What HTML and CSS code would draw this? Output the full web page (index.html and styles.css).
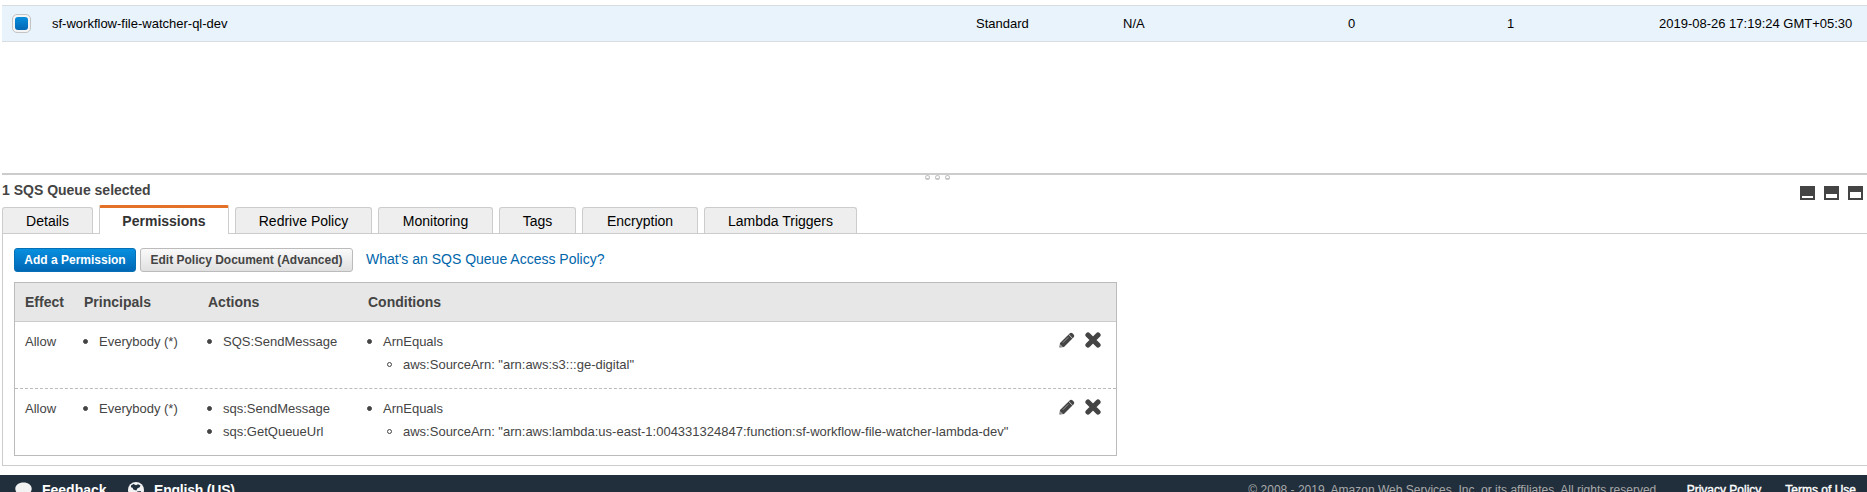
FILE: index.html
```html
<!DOCTYPE html>
<html lang="en">
<head>
<meta charset="utf-8">
<title>SQS Management Console</title>
<link rel="stylesheet" href="styles.css">
</head>
<body>
<svg class="defs" aria-hidden="true">
  <symbol id="pencil" viewBox="0 0 16 16">
    <path d="M0.4 15.5 L1 11 L10.6 1.4 Q12 0 13.4 1.2 L14.7 2.5 Q16 4 14.7 5.3 L5 15 Z" fill="#444"/>
    <path d="M9.7 2.5 L13.6 6.4" stroke="#fff" stroke-width=".7"/>
    <path d="M3.8 10.8 L9.3 5.3" stroke="#aaa" stroke-width=".8"/>
    <path d="M1.5 12 L2.2 13.5 L4 14.4 L1.3 14.8 Z" fill="#ccc"/>
  </symbol>
  <symbol id="cross" viewBox="0 0 16 16">
    <path d="M3 3 L13 13 M13 3 L3 13" stroke="#444" stroke-width="5.2" stroke-linecap="round"/>
  </symbol>
</svg>
<main class="console">
  <div class="queue-row">
    <span class="checkbox"><i></i></span>
    <span class="name">sf-workflow-file-watcher-ql-dev</span>
    <span>Standard</span>
    <span>N/A</span>
    <span>0</span>
    <span>1</span>
    <span>2019-08-26 17:19:24 GMT+05:30</span>
  </div>
  <div class="splitter"><span class="grip"><i></i><i></i><i></i></span></div>
  <header class="selection">
    <h2>1 SQS Queue selected</h2>
    <div class="sizes"><i class="low"></i><i class="mid"></i><i class="high"></i></div>
  </header>
  <nav class="tabs">
    <a class="tab details">Details</a>
    <a class="tab active">Permissions</a>
    <a class="tab redrive">Redrive Policy</a>
    <a class="tab monitoring">Monitoring</a>
    <a class="tab tags">Tags</a>
    <a class="tab encryption">Encryption</a>
    <a class="tab lambda">Lambda Triggers</a>
  </nav>
  <section class="panel">
    <div class="toolbar">
      <button class="btn primary">Add a Permission</button>
      <button class="btn secondary">Edit Policy Document (Advanced)</button>
      <a class="help">What's an SQS Queue Access Policy?</a>
    </div>
    <div class="policy">
      <div class="line head"><span>Effect</span><span>Principals</span><span>Actions</span><span>Conditions</span></div>
      <div class="line">
        <span>Allow</span>
        <ul><li>Everybody (*)</li></ul>
        <ul><li>SQS:SendMessage</li></ul>
        <ul><li>ArnEquals<ul class="sub"><li>aws:SourceArn: "arn:aws:s3:::ge-digital"</li></ul></li></ul>
        <div class="tools"><svg><use href="#pencil"/></svg><svg><use href="#cross"/></svg></div>
      </div>
      <div class="line last">
        <span>Allow</span>
        <ul><li>Everybody (*)</li></ul>
        <ul><li>sqs:SendMessage</li><li>sqs:GetQueueUrl</li></ul>
        <ul><li>ArnEquals<ul class="sub"><li>aws:SourceArn: "arn:aws:lambda:us-east-1:004331324847:function:sf-workflow-file-watcher-lambda-dev"</li></ul></li></ul>
        <div class="tools"><svg><use href="#pencil"/></svg><svg><use href="#cross"/></svg></div>
      </div>
    </div>
  </section>
</main>
<footer class="footer">
  <svg class="bubble" viewBox="0 0 18 16"><path d="M9 0C4 0 .3 2.8.3 6.7c0 2.3 1.3 4.2 3.3 5.4L3 16l4-2.8 2 .2c5 0 8.7-2.8 8.7-6.7S14 0 9 0Z" fill="#f2f2f2"/></svg>
  <b class="feedback">Feedback</b>
  <svg class="globe" viewBox="0 0 16 16"><circle cx="8" cy="8" r="8" fill="#f2f2f2"/><path d="M3 3.5 5.5 2 8 3.2 10 2.2 12.5 3.4 11.7 5.3 9.5 6.2 8.3 8.6 5.3 7.6 4.6 5.7 3 5.2ZM9 9.5 13 9 12 13 9.5 14Z" fill="#212f3c"/></svg>
  <b class="language">English (US)</b>
  <span class="copyright">© 2008 - 2019, Amazon Web Services, Inc. or its affiliates. All rights reserved.</span>
  <a class="legal privacy">Privacy Policy</a>
  <a class="legal terms">Terms of Use</a>
</footer>
</body>
</html>
```
FILE: styles.css
```css
*, *::before { box-sizing: border-box; }
body {
  margin: 0;
  height: 492px;
  overflow: hidden;
  background: #fff;
  color: #444;
  font: 13px/23px "Liberation Sans", Arial, sans-serif;
  white-space: nowrap;
}
.defs { display: none; }
.console { padding: 5px 0 0 2px; height: 475px; }

.queue-row {
  display: grid;
  grid-template-columns: 50px 924px 147px 225px 159px 152px 1fr;
  align-items: center;
  height: 37px;
  background: #e8f3fc;
  border: solid #dadddf;
  border-width: 1px 0;
  color: #000;
}
.checkbox {
  display: grid;
  place-items: center;
  width: 19px;
  height: 19px;
  margin-left: 10px;
  border: 1px solid #c4c4c4;
  border-radius: 5px;
  background: #f4f4f4;
}
.checkbox i {
  width: 13px;
  height: 13px;
  border-radius: 3px;
  background: linear-gradient(#088edb, #0067b5);
}
.splitter { margin-top: 131px; height: 8px; border-top: 2px solid #ccc; }
.grip { display: flex; gap: 5px; margin-left: 923px; }
.grip i { width: 5px; height: 5px; border: solid #c4c4c4; border-width: 1px 1.5px 2px; border-radius: 3px; }

.selection { display: flex; justify-content: space-between; height: 24px; }
h2 { margin: -2px 0 0; font-size: 14px; line-height: 22px; }
.sizes { display: flex; gap: 9px; margin: 5px 4px 0 0; }
.sizes i { width: 15px; height: 14px; border: 2px solid #444; background: #fff; }
.sizes .low { border-top-width: 10px; }
.sizes .mid { border-top-width: 8px; }
.sizes .high { border-top-width: 6px; }

.tabs { display: flex; align-items: flex-end; gap: 6px; height: 29px; border-bottom: 1px solid #ccc; }
.tab {
  height: 26px;
  border: 1px solid #ccc;
  border-bottom: 0;
  border-radius: 3px 3px 0 0;
  background: #eee;
  color: #000;
  font-size: 14px;
  line-height: 26px;
  text-align: center;
}
.tab.active {
  height: 29px;
  margin-bottom: -1px;
  border-top: 3px solid #e47128;
  border-radius: 2px 2px 0 0;
  background: #fff;
  color: #333;
  font-weight: bold;
  width: 130px;
}
.details { width: 91px; }
.redrive { width: 137px; }
.monitoring { width: 115px; }
.tags { width: 77px; }
.encryption { width: 116px; }
.lambda { width: 153px; }

.panel { height: 232px; padding: 14px 0 0 11px; border: solid #ccc; border-width: 0 0 1px 1px; }
.toolbar { display: flex; height: 34px; }
.btn {
  height: 24px;
  padding: 0;
  border: 1px solid #bbb;
  border-radius: 3px;
  font: bold 12px/20px "Liberation Sans", Arial, sans-serif;
}
.primary { width: 122px; border-color: #0570b5; background: linear-gradient(#088fdf, #0067b5); color: #fff; }
.secondary { width: 213px; margin-left: 4px; background: linear-gradient(#fafafa, #e0e0e0); color: #444; }
.help { margin-left: 13px; font-size: 14px; line-height: 22px; color: #0066ab; }

.policy { width: 1103px; border: 1px solid #bbb; }
.line {
  display: grid;
  grid-template-columns: 59px 124px 160px 691px 1fr;
  height: 67px;
  padding: 8px 0 0 10px;
  border-bottom: 1px dashed #bbb;
}
.line.last { height: 66px; border-bottom: 0; }
.line.head {
  height: 39px;
  background: #e7e7e7;
  border-bottom: 1px solid #ccc;
  font-size: 14px;
  line-height: 22px;
  font-weight: bold;
}
ul { margin: 0; padding-left: 15px; list-style: none; }
ul.sub { padding-left: 20px; }
li::before {
  content: "";
  display: inline-block;
  width: 5px;
  height: 5px;
  margin: 0 11px 0 -16px;
  border: 1px solid #444;
  border-radius: 50%;
  background: #444;
  vertical-align: 2px;
}
.sub li::before { background: none; }
.tools { display: flex; gap: 10px; padding-top: 2px; }
.tools svg { width: 16px; height: 16px; }

.footer {
  display: flex;
  align-items: flex-start;
  height: 17px;
  padding: 7px 0 0 15px;
  overflow: hidden;
  background: #212f3c;
  color: #fff;
  font-size: 14px;
  line-height: 16px;
}
.bubble { width: 17px; height: 16px; flex: none; }
.feedback { margin-left: 10px; width: 86px; }
.globe { width: 16px; height: 16px; flex: none; }
.language { margin-left: 10px; letter-spacing: -.2px; }
.copyright { margin-left: auto; color: #aaa; font-size: 12px; line-height: 16px; }
.legal { font-size: 12px; line-height: 16px; -webkit-text-stroke: .4px #fff; }
.privacy { margin-left: 27px; }
.terms { margin: 0 11px 0 24px; }
```
